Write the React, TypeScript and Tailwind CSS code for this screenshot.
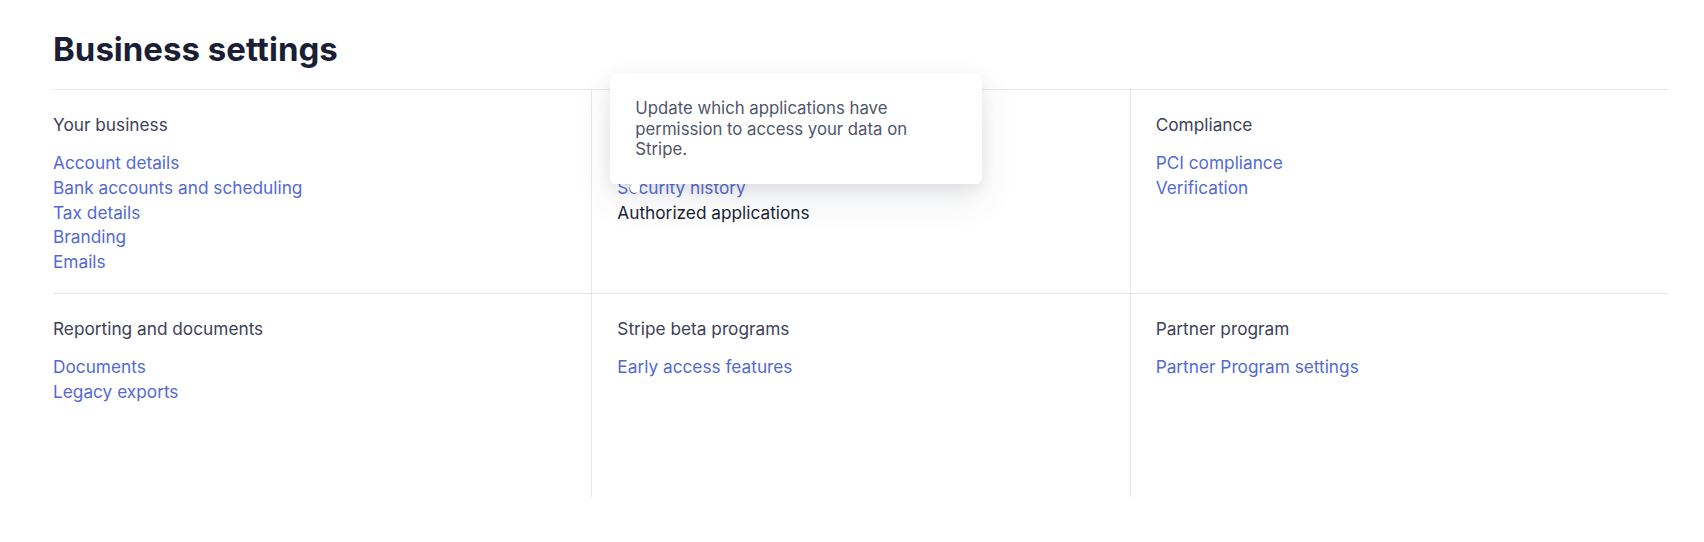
const sections = [
  {
    title: "Your business",
    links: ["Account details", "Bank accounts and scheduling", "Tax details", "Branding", "Emails"],
  },
  {
    title: "Team and security",
    links: ["Team", "Security history", "Authorized applications"],
    active: "Authorized applications",
    tooltip: "Update which applications have permission to access your data on Stripe.",
  },
  {
    title: "Compliance",
    links: ["PCI compliance", "Verification"],
  },
  {
    title: "Reporting and documents",
    links: ["Documents", "Legacy exports"],
  },
  {
    title: "Stripe beta programs",
    links: ["Early access features"],
  },
  {
    title: "Partner program",
    links: ["Partner Program settings"],
  },
];

type Section = {
  title: string;
  links: string[];
  active?: string;
  tooltip?: string;
};

function Cell({ section, index }: { section: Section; index: number }) {
  const first = index % 3 === 0;
  return (
    <div
      className={
        first
          ? "relative flex h-[204px] flex-col border-t border-[#e3e8ee] pt-[22px] pr-6"
          : "relative flex h-[204px] flex-col border-t border-l border-[#e3e8ee] pt-[22px] pl-[25px] pr-6"
      }
    >
      <h3 className="text-[17.25px] leading-[25px] font-normal text-[#3c4257]">{section.title}</h3>
      <ul className="mt-[14px] flex flex-col">
        {section.links.map((l) => (
          <li key={l}>
            <a
              href="#"
              className={
                l === section.active
                  ? "text-[17.25px] leading-[24.75px] text-[#1a1f36]"
                  : "text-[17.25px] leading-[24.75px] text-[#5469d4]"
              }
            >
              {l}
            </a>
          </li>
        ))}
      </ul>

      {section.tooltip && (
        <div className="absolute left-[18px] top-[-17px] z-10 w-[372px] rounded-md bg-white px-[25px] pt-[25px] pb-[24px] shadow-[0_15px_35px_0_rgba(60,66,87,0.10),0_5px_15px_0_rgba(0,0,0,0.07)]">
          <p className="text-[16.75px] leading-[20.5px] text-[#4f566b]">{section.tooltip}</p>
          {/* little pointer below the popover */}
          <span className="absolute bottom-[-9px] left-[20px] h-[10px] w-[10px] rounded-full bg-white" />
        </div>
      )}
    </div>
  );
}

export default function App() {
  return (
    <div className="min-h-[542px] bg-white font-['Inter',sans-serif] antialiased">
      <div className="ml-[53px] mr-[36px]">
        <h1 className="pt-[26px] pb-[17px] text-[33px] leading-[46px] font-bold text-[#1a1f36]">
          Business settings
        </h1>
        {/* settings grid: 2 rows x 3 cols */}
        <div className="grid grid-cols-3">
          {sections.map((s, i) => (
            <Cell key={s.title} section={s} index={i} />
          ))}
        </div>
      </div>
    </div>
  );
}
